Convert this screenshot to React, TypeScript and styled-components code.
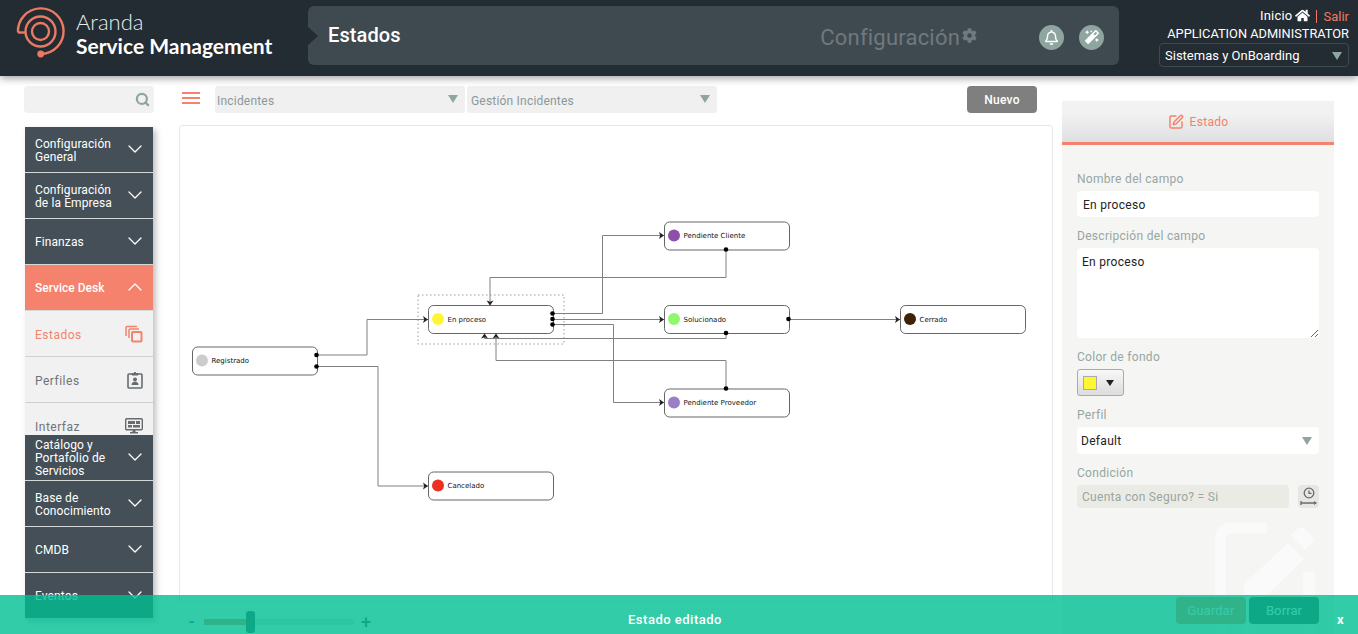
import React from "react";
import styled, { createGlobalStyle } from "styled-components";
import { Search, ChevronDown, ChevronUp, SquarePen } from "lucide-react";
import { FaHome, FaCog, FaRegBell, FaMagic } from "react-icons/fa";

const Global = createGlobalStyle`
  html, body { margin: 0; padding: 0; height: 634px; overflow: hidden; background: #fff; }
  body { font-family: Roboto, "Liberation Sans", sans-serif; }
  * { box-sizing: border-box; }
`;

const Page = styled.div`
  position: relative;
  width: 1358px;
  height: 634px;
  overflow: hidden;
`;

const Header = styled.header`
  position: relative;
  z-index: 3;
  display: flex;
  height: 76px;
  background: #232b33;
  box-shadow: 0 2px 8px rgba(0, 0, 0, 0.4);
`;

const Brand = styled.div`
  display: flex;
  width: 308px;
  padding: 6px 0 0 16px;
  gap: 10px;
`;

const BrandText = styled.div`
  display: flex;
  flex-direction: column;
  color: #fff;
  padding-top: 4px;
`;

const BrandTop = styled.span`
  font-family: Lato, sans-serif;
  font-weight: 300;
  font-size: 22px;
  line-height: 24px;
  color: #e8eef0;
`;

const BrandBottom = styled.span`
  font-family: Lato, sans-serif;
  font-weight: 700;
  font-size: 21px;
  line-height: 24px;
  white-space: nowrap;
`;

const TitleBar = styled.div`
  position: relative;
  display: flex;
  align-items: center;
  width: 811px;
  height: 59px;
  margin-top: 6px;
  padding: 0 15px 0 20px;
  background: #3f4a50;
  border-radius: 6px;
  &::before {
    content: "";
    position: absolute;
    left: 0;
    top: 21px;
    border-style: solid;
    border-width: 9px 0 9px 10px;
    border-color: transparent transparent transparent #232b33;
  }
`;

const PageTitle = styled.h1`
  margin: 0 0 1px;
  font-size: 20px;
  font-weight: 500;
  color: #fff;
  letter-spacing: 0.1px;
  flex: 1;
`;

const ConfigLabel = styled.div`
  display: flex;
  align-items: flex-start;
  gap: 2px;
  margin: 4px 62px 0 0;
  font-size: 22px;
  letter-spacing: 0.2px;
  color: #70797d;
  svg { margin-top: 3px; }
`;

const RoundIcon = styled.div<{ $ml: number }>`
  display: flex;
  align-items: center;
  justify-content: center;
  width: 25px;
  height: 25px;
  margin: 3px 0 0 ${(p) => p.$ml}px;
  border-radius: 50%;
  background: #8fa5a0;
  color: #fff;
`;

const UserBox = styled.div`
  flex: 1;
  display: flex;
  flex-direction: column;
  align-items: flex-end;
  padding: 8px 9px 0 0;
  color: #fff;
  font-size: 12.800px;
`;

const TopLinks = styled.div`
  display: flex;
  align-items: center;
  height: 16px;
  line-height: 16px;
  font-size: 13px;
  letter-spacing: 0.2px;
  svg { margin: 0 6px 2px 3px; }
`;

const Salir = styled.span`
  color: #f07a62;
  border-left: 1px solid #f07a62;
  padding-left: 6px;
  line-height: 13px;
  letter-spacing: 0;
`;

const Role = styled.div`
  margin-top: 1px;
  line-height: 17px;
  white-space: nowrap;
`;

const CompanySelect = styled.div`
  position: relative;
  width: 190px;
  height: 24px;
  margin-top: 1px;
  padding-left: 5px;
  line-height: 23px;
  font-size: 13px;
  border: 1px solid #3f4a50;
  border-radius: 4px;
`;

const Triangle = styled.span<{ $color?: string; $right: number; $top: number }>`
  position: absolute;
  right: ${(p) => p.$right}px;
  top: ${(p) => p.$top}px;
  border-style: solid;
  border-width: 8px 5.500px 0;
  border-color: ${(p) => p.$color || "#8fa5a0"} transparent transparent;
`;

const Main = styled.main`
  display: flex;
  height: 558px;
`;

const SideColumn = styled.aside`
  width: 130px;
  margin-left: 24px;
  padding-top: 10px;
`;

const SideSearch = styled.div`
  display: flex;
  align-items: center;
  justify-content: flex-end;
  height: 27px;
  padding-right: 4px;
  background: #f1f1f1;
  border-radius: 4px;
  color: #8fa5a0;
`;

const SideMenu = styled.nav`
  margin: 14px 0 0 1px;
  width: 128px;
  box-shadow: 3px 3px 6px rgba(0, 0, 0, 0.25);
`;

const MenuHead = styled.div<{ $active?: boolean }>`
  display: flex;
  align-items: center;
  justify-content: space-between;
  height: 46px;
  padding: 0 10px;
  border-bottom: 1px solid #d5d8d8;
  background: ${(p) => (p.$active ? "#f4826c" : "#444f57")};
  color: #fff;
  font-size: 12px;
  font-weight: ${(p) => (p.$active ? 500 : 400)};
  line-height: 13px;
  letter-spacing: ${(p) => (p.$active ? 0 : 0.1)}px;
  svg { flex: none; margin: 0 -4px 2px 0; }
`;

const HeadLabel = styled.span`
  padding-top: 2px;
`;

const SubScroll = styled.div`
  height: 124px;
  overflow: hidden;
  background: #f1f1f1;
`;

const SubItem = styled.div<{ $active?: boolean }>`
  display: flex;
  align-items: center;
  justify-content: space-between;
  height: 46px;
  padding: 2px 10px 0;
  border-bottom: 1px solid #d0d0d0;
  font-size: 12px;
  letter-spacing: 0.5px;
  color: ${(p) => (p.$active ? "#f4826c" : "#6e7478")};
  svg { margin-bottom: 1px; }
`;

const Center = styled.section`
  width: 874px;
  margin-left: 25px;
  padding-top: 10px;
`;

const Toolbar = styled.div`
  display: flex;
  align-items: center;
  height: 27px;
`;

const Burger = styled.div`
  width: 18px;
  height: 12px;
  margin: 0 15px 3px 3px;
  border-top: 2px solid #f4826c;
  border-bottom: 2px solid #f4826c;
  position: relative;
  &::after {
    content: "";
    position: absolute;
    left: 0;
    right: 0;
    top: 3px;
    height: 2px;
    background: #f4826c;
  }
`;

const FilterSelect = styled.div<{ $pad: number }>`
  position: relative;
  width: 250px;
  height: 27px;
  margin-right: 2px;
  padding: 6px 0 0 ${(p) => p.$pad}px;
  background: #f0f0f0;
  border-radius: 3px;
  color: #8d979a;
  font-size: 12px;
  line-height: 18px;
  letter-spacing: 0.2px;
`;

const NewButton = styled.button`
  width: 70px;
  height: 27px;
  margin-left: 248px;
  border: 0;
  border-radius: 4px;
  background: #7f7f7f;
  color: #fff;
  font: 500 12px Roboto, sans-serif;
  letter-spacing: 0.3px;
`;

const Canvas = styled.div`
  height: 477px;
  margin-top: 12px;
  border: 1px solid #e8e8e8;
  border-radius: 3px;
  svg { display: block; }
`;

const ZoomRow = styled.div`
  display: flex;
  align-items: center;
  height: 22px;
  margin-top: 9px;
  color: #444f57;
  font-size: 18px;
  font-weight: 500;
`;

const ZoomSign = styled.span<{ $w: number }>`
  width: ${(p) => p.$w}px;
  text-align: center;
  line-height: 22px;
`;

const ZoomTrack = styled.div`
  position: relative;
  width: 150px;
  height: 6px;
  background: #e2e2e2;
`;

const ZoomFill = styled.div`
  height: 6px;
  background: #f4826c;
`;

const ZoomThumb = styled.div`
  position: absolute;
  left: 42px;
  top: -8px;
  width: 9px;
  height: 22px;
  border-radius: 3px;
  background: #444f57;
`;

const RightPanel = styled.aside`
  width: 272px;
  height: 600px;
  margin: 25px 0 0 9px;
  background: #f5f5f3;
`;

const PanelHead = styled.div`
  display: flex;
  align-items: center;
  justify-content: center;
  gap: 6px;
  height: 44px;
  border-bottom: 3px solid #f4826c;
  background: linear-gradient(#f2f2f2 30%, #dedfe0);
  color: #f4826c;
  font-size: 12px;
  letter-spacing: 0.3px;
`;

const Form = styled.div`
  position: relative;
  padding: 26px 15px 0;
`;

const Label = styled.label`
  display: block;
  height: 16px;
  margin-bottom: 4px;
  color: #97a6a3;
  font-size: 12px;
  line-height: 16px;
  letter-spacing: 0.3px;
`;

const TextInput = styled.input`
  display: block;
  width: 100%;
  height: 26px;
  margin-bottom: 11px;
  padding: 2px 6px 0;
  border: 0;
  outline: 0;
  border-radius: 4px;
  background: #fff;
  color: #222;
  font: 12px Roboto, sans-serif;
  letter-spacing: 0.3px;
`;

const TextArea = styled.textarea`
  display: block;
  width: 100%;
  height: 90px;
  margin-bottom: 11px;
  padding: 7px 5px;
  border: 0;
  outline: 0;
  border-radius: 4px;
  background: #fff;
  color: #222;
  font: 12px Roboto, sans-serif;
  letter-spacing: 0.3px;
`;

const ColorButton = styled.div`
  position: relative;
  width: 47px;
  height: 27px;
  margin-bottom: 11px;
  border: 1px solid #aaa;
  border-radius: 3px;
  background: linear-gradient(#f8f8f8, #dcdcdc);
`;

const Swatch = styled.span`
  position: absolute;
  left: 5px;
  top: 6px;
  width: 14px;
  height: 14px;
  background: #fff533;
  border: 1px solid #aaa;
`;

const SmallTriangle = styled.span`
  position: absolute;
  right: 9px;
  top: 10px;
  border-style: solid;
  border-width: 6px 4.500px 0;
  border-color: #222 transparent transparent;
`;

const ProfileSelect = styled.div`
  position: relative;
  height: 27px;
  margin-bottom: 11px;
  padding-left: 4px;
  background: #fff;
  border-radius: 4px;
  color: #222;
  font-size: 12px;
  line-height: 29px;
  letter-spacing: 0.3px;
`;

const ConditionRow = styled.div`
  display: flex;
  justify-content: space-between;
`;

const ConditionValue = styled.div`
  width: 212px;
  height: 23px;
  padding-left: 5px;
  background: #ebebe5;
  border-radius: 4px;
  color: #98a5a2;
  font-size: 12px;
  line-height: 25px;
  letter-spacing: 0.3px;
`;

const ConditionButton = styled.div`
  display: flex;
  align-items: center;
  justify-content: center;
  width: 21px;
  height: 23px;
  background: #e6e6e2;
  border-radius: 4px;
`;

const Watermark = styled.div`
  position: absolute;
  left: 153px;
  top: 377px;
  color: #fafafa;
`;

const Actions = styled.div`
  position: absolute;
  right: 15px;
  top: 452px;
  display: flex;
  gap: 3px;
`;

const ActionButton = styled.button<{ $bg: string }>`
  width: 70px;
  height: 27px;
  border: 0;
  border-radius: 4px;
  background: ${(p) => p.$bg};
  color: #fff;
  font: 400 13px Roboto, sans-serif;
  letter-spacing: 0.1px;
`;

const Toast = styled.div`
  position: absolute;
  left: 0;
  right: 0;
  bottom: 0;
  z-index: 5;
  display: flex;
  justify-content: center;
  height: 39px;
  padding: 16px 8px 0 0;
  background: rgba(0, 191, 146, 0.8);
  color: #fff;
  font-size: 13px;
  font-weight: 500;
  line-height: 17px;
  letter-spacing: 0.5px;
`;

const ToastClose = styled.span`
  position: absolute;
  right: 14px;
  top: 17px;
  font-size: 13px;
  font-weight: 700;
  line-height: 15px;
`;

const Logo = () => (
  <svg width="50" height="52" viewBox="16 6 50 52" fill="none" stroke="#ec7a62" strokeWidth="2.400">
    <circle cx="40.500" cy="31.500" r="8.500" />
    <circle cx="40.500" cy="31.500" r="15" />
    <path d="M18 32.500H25.500" />
    <path d="M18 32.500A22.800 22.800 0 1 1 40.700 54" />
    <circle cx="40.700" cy="54" r="3.400" fill="#ec7a62" stroke="none" />
  </svg>
);

const CopiesIcon = () => (
  <svg width="18" height="18" viewBox="0 0 18 18" fill="none" stroke="#f4826c" strokeWidth="1.500">
    <path d="M12 1.500H2a1 1 0 0 0-1 1V11" />
    <path d="M14 4H5a1 1 0 0 0-1 1v8" />
    <rect x="7" y="7" width="9.500" height="9.500" rx="1" strokeWidth="2" />
  </svg>
);

const BadgeIcon = () => (
  <svg width="16" height="18" viewBox="0 0 16 18" fill="none">
    <rect x="1" y="3" width="14" height="14" rx="1" stroke="#666c70" strokeWidth="1.600" />
    <path d="M5 4V2.500h2L8 1l1 1.500h2V4z" fill="#666c70" stroke="#666c70" />
    <circle cx="8" cy="8.500" r="2" fill="#666c70" />
    <path d="M4.500 14c0-2.500 1.500-3.300 3.500-3.300s3.500 .8 3.500 3.300z" fill="#666c70" />
  </svg>
);

const MonitorIcon = () => (
  <svg width="18" height="16" viewBox="0 0 18 16" fill="none">
    <rect x="0.700" y="0.700" width="16.600" height="11" rx="1" stroke="#666c70" strokeWidth="1.400" />
    <path d="M3 3h7v3H3zM11 3h4v3h-4zM3 7h4v2.500H3zM8 7h7v2.500H8z" fill="#666c70" />
    <path d="M7.500 12h3v2h2.500v1.500H5V14h2.500z" fill="#666c70" />
  </svg>
);

const ConditionIcon = () => (
  <svg width="18" height="20" viewBox="0 0 18 20" fill="none" stroke="#666c70" strokeWidth="1.300">
    <circle cx="9" cy="6" r="4.800" />
    <path d="M9 3.500V6.300h2.500" />
    <path d="M1 14v4M1 16h15" />
    <path d="M14 14l3 2-3 2z" fill="#666c70" stroke="none" />
  </svg>
);

const WatermarkIcon = () => (
  <svg width="104" height="112" viewBox="0 0 104 112" fill="none">
    <path d="M52 6H16a11 11 0 0 0-11 11v95" stroke="currentColor" strokeWidth="11" />
    <path d="M94 50v62" stroke="currentColor" strokeWidth="12" />
    <path d="M29 112V62L73 21 89 37 40 85v27z" fill="currentColor" />
    <path d="M75 13l9-7q3-2 5 0l9 9q2 2 0 5l-8 8z" fill="currentColor" />
  </svg>
);

type Box = { label: string; x: number; y: number; color: string };
const nodes: Box[] = [
  { label: "Registrado", x: 192.500, y: 347, color: "#cccccc" },
  { label: "En proceso", x: 428.500, y: 305.500, color: "#fff533" },
  { label: "Pendiente Cliente", x: 664.500, y: 222, color: "#8e4fa8" },
  { label: "Solucionado", x: 664.500, y: 305.500, color: "#8ef86e" },
  { label: "Pendiente Proveedor", x: 664.500, y: 389, color: "#9b7fc4" },
  { label: "Cerrado", x: 900.500, y: 305.500, color: "#3d2205" },
  { label: "Cancelado", x: 428.500, y: 472, color: "#ee2f24" },
];

const links = [
  "M317 355H367V319.500H428",
  "M317 366.500H378V486H428",
  "M726 250V277.500H490V305",
  "M552.500 313.500H602.500V235.500H664",
  "M552.500 319.500H664",
  "M552.500 324.500H613.500V402.500H664",
  "M726 333V338.500H484.500V334",
  "M726 388V360.500H496V334",
  "M789 319.500H900",
];

const heads = [
  { x: 428, y: 319.500, dir: "r" },
  { x: 428, y: 486, dir: "r" },
  { x: 490, y: 305.500, dir: "d" },
  { x: 664, y: 235.500, dir: "r" },
  { x: 664, y: 319.500, dir: "r" },
  { x: 664, y: 402.500, dir: "r" },
  { x: 484.500, y: 333.500, dir: "u" },
  { x: 496, y: 333.500, dir: "u" },
  { x: 900, y: 319.500, dir: "r" },
];

const dots = [
  [316.500, 355],
  [316.500, 366.500],
  [552.500, 313.500],
  [552.500, 319],
  [552.500, 324.500],
  [726, 249.500],
  [726, 333],
  [726, 388.500],
  [788.500, 319],
];

const headPath = (x: number, y: number, dir: string) => {
  if (dir === "r") return `M${x} ${y}l-5 -3.500 1.200 3.500 -1.200 3.500z`;
  if (dir === "d") return `M${x} ${y}l-3.500 -5 3.500 1.200 3.500 -1.200z`;
  return `M${x} ${y}l-3.500 5 3.500 -1.200 3.500 1.200z`;
};

const Diagram = () => (
  <svg width="872" height="475" viewBox="180 126 872 475" fontFamily="'DejaVu Sans', sans-serif">
    <rect x="418" y="295" width="146" height="49" fill="none" stroke="#999" strokeDasharray="1.500 2.500" />
    {links.map((d) => (
      <path key={d} d={d} fill="none" stroke="#808080" strokeWidth="1" />
    ))}
    {nodes.map((n) => (
      <g key={n.label}>
        <rect x={n.x} y={n.y} width="125" height="28" rx="5" fill="#fff" stroke="#666" strokeWidth="1" />
        <circle cx={n.x + 9.500} cy={n.y + 13.500} r="6" fill={n.color} />
        <text x={n.x + 19} y={n.y + 16} fontSize="7" fill="#111">{n.label}</text>
      </g>
    ))}
    {heads.map((h) => (
      <path key={`${h.x}-${h.y}`} d={headPath(h.x, h.y, h.dir)} fill="#222" />
    ))}
    {dots.map(([x, y]) => (
      <circle key={`${x}-${y}`} cx={x} cy={y} r="2.300" fill="#000" />
    ))}
  </svg>
);

const closedTop = [["Configuración", "General"], ["Configuración", "de la Empresa"], ["Finanzas"]];
const closedBottom = [
  ["Catálogo y", "Portafolio de", "Servicios"],
  ["Base de", "Conocimiento"],
  ["CMDB"],
  ["Eventos"],
];

const Lines = ({ lines }: { lines: string[] }) => (
  <HeadLabel>
    {lines.map((l) => (
      <React.Fragment key={l}>
        {l}
        <br />
      </React.Fragment>
    ))}
  </HeadLabel>
);

export default function App() {
  return (
    <Page>
      <Global />
      <Header>
        <Brand>
          <Logo />
          <BrandText>
            <BrandTop>Aranda</BrandTop>
            <BrandBottom>Service Management</BrandBottom>
          </BrandText>
        </Brand>
        <TitleBar>
          <PageTitle>Estados</PageTitle>
          <ConfigLabel>
            Configuración
            <FaCog size={15} />
          </ConfigLabel>
          <RoundIcon $ml={0}>
            <FaRegBell size={15} />
          </RoundIcon>
          <RoundIcon $ml={15}>
            <FaMagic size={14} />
          </RoundIcon>
        </TitleBar>
        <UserBox>
          <TopLinks>
            Inicio
            <FaHome size={15} />
            <Salir>Salir</Salir>
          </TopLinks>
          <Role>APPLICATION ADMINISTRATOR</Role>
          <CompanySelect>
            Sistemas y OnBoarding
            <Triangle $right={6} $top={8} />
          </CompanySelect>
        </UserBox>
      </Header>
      <Main>
        <SideColumn>
          <SideSearch>
            <Search size={15} strokeWidth={3.600} />
          </SideSearch>
          <SideMenu>
            {closedTop.map((lines) => (
              <MenuHead key={lines.join()}>
                <Lines lines={lines} />
                <ChevronDown size={24} strokeWidth={1.300} />
              </MenuHead>
            ))}
            <MenuHead $active>
              <Lines lines={["Service Desk"]} />
              <ChevronUp size={24} strokeWidth={1.300} />
            </MenuHead>
            <SubScroll>
              <SubItem $active>
                Estados
                <CopiesIcon />
              </SubItem>
              <SubItem>
                Perfiles
                <BadgeIcon />
              </SubItem>
              <SubItem>
                Interfaz
                <MonitorIcon />
              </SubItem>
            </SubScroll>
            {closedBottom.map((lines) => (
              <MenuHead key={lines.join()}>
                <Lines lines={lines} />
                <ChevronDown size={24} strokeWidth={1.300} />
              </MenuHead>
            ))}
          </SideMenu>
        </SideColumn>
        <Center>
          <Toolbar>
            <Burger />
            <FilterSelect $pad={2}>
              Incidentes
              <Triangle $right={7} $top={9} />
            </FilterSelect>
            <FilterSelect $pad={4}>
              Gestión Incidentes
              <Triangle $right={7} $top={9} />
            </FilterSelect>
            <NewButton>Nuevo</NewButton>
          </Toolbar>
          <Canvas>
            <Diagram />
          </Canvas>
          <ZoomRow>
            <ZoomSign $w={25}>-</ZoomSign>
            <ZoomTrack>
              <ZoomFill style={{ width: `${(46 / 150) * 100}%` }} />
              <ZoomThumb />
            </ZoomTrack>
            <ZoomSign $w={24}>+</ZoomSign>
          </ZoomRow>
        </Center>
        <RightPanel>
          <PanelHead>
            <SquarePen size={16} strokeWidth={2.200} />
            Estado
          </PanelHead>
          <Form>
            <Label>Nombre del campo</Label>
            <TextInput readOnly value="En proceso" />
            <Label>Descripción del campo</Label>
            <TextArea readOnly value="En proceso" />
            <Label>Color de fondo</Label>
            <ColorButton>
              <Swatch />
              <SmallTriangle />
            </ColorButton>
            <Label>Perfil</Label>
            <ProfileSelect>
              Default
              <Triangle $right={7} $top={10} />
            </ProfileSelect>
            <Label>Condición</Label>
            <ConditionRow>
              <ConditionValue>Cuenta con Seguro? = Si</ConditionValue>
              <ConditionButton>
                <ConditionIcon />
              </ConditionButton>
            </ConditionRow>
            <Watermark>
              <WatermarkIcon />
            </Watermark>
            <Actions>
              <ActionButton $bg="#f4826c">Guardar</ActionButton>
              <ActionButton $bg="#444f57">Borrar</ActionButton>
            </Actions>
          </Form>
        </RightPanel>
      </Main>
      <Toast>
        Estado editado
        <ToastClose>x</ToastClose>
      </Toast>
    </Page>
  );
}
